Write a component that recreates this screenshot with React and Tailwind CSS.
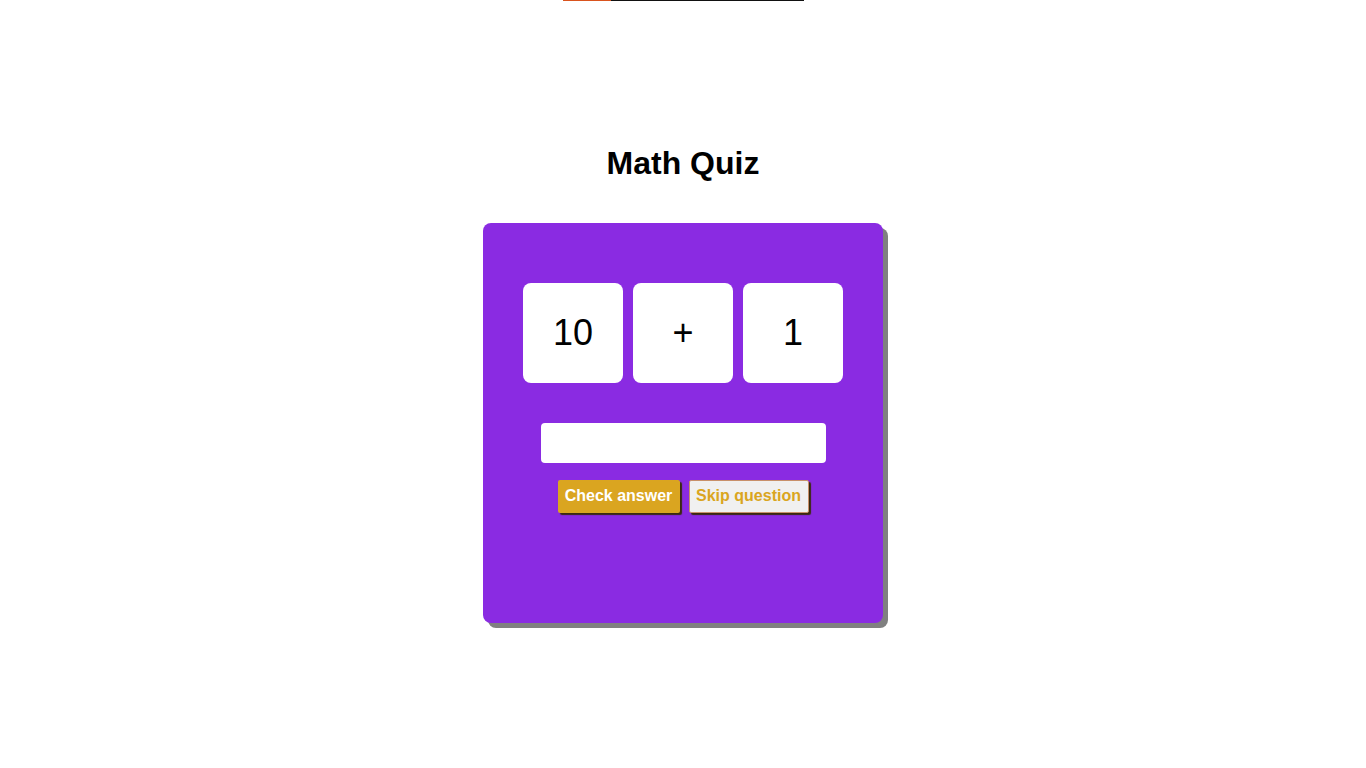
export default function App() {
  return (
    <div className="min-h-screen bg-white flex flex-col items-center" style={{ fontFamily: '"Liberation Sans", Arial, sans-serif' }}>
      <div className="flex h-px w-[241px] bg-[#111111]">
        <div className="h-px w-[48px] bg-[#d9531e]" />
      </div>
      <h1 className="mt-[144px] text-[32px] leading-[37px] font-bold text-black">Math Quiz</h1>
      <div className="mt-[41px] w-[400px] h-[400px] bg-[#8a2be2] rounded-[8px] shadow-[5px_5px_0_#808080] flex flex-col items-center pt-[60px]">
        <div className="flex gap-[10px]">
          <div className="w-[100px] h-[100px] bg-white rounded-[8px] flex items-center justify-center text-[36px] text-black">10</div>
          <div className="w-[100px] h-[100px] bg-white rounded-[8px] flex items-center justify-center text-[36px] text-black">+</div>
          <div className="w-[100px] h-[100px] bg-white rounded-[8px] flex items-center justify-center text-[36px] text-black">1</div>
        </div>
        <input type="text" className="mt-[40px] w-[285px] h-[40px] bg-white rounded-[4px] outline-none border-0 px-2" />
        <div className="mt-[17px] flex gap-[9px]">
          <button className="w-[122px] h-[33px] pb-[2px] bg-[#daa520] text-white font-bold text-[16px] rounded-[2px] shadow-[2px_2px_1px_#3a2a10]">Check answer</button>
          <button className="w-[120px] h-[33px] pb-[2px] bg-[#f0f0f0] text-[#daa520] font-bold text-[16px] rounded-[2px] border border-[#c8906a] shadow-[2px_2px_1px_#3a2a10]">Skip question</button>
        </div>
      </div>
    </div>
  );
}
